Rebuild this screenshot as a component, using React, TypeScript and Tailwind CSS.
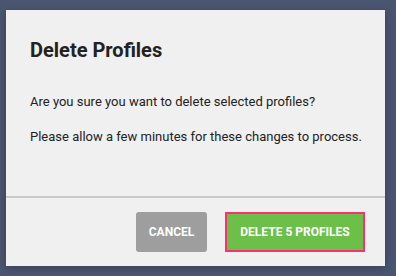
export default function App() {
  return (
    <div className="h-[276px] w-[396px] overflow-hidden bg-[#4a5570] pl-[6px] pt-[10px] font-['Roboto',sans-serif]">
      <div className="flex h-[256px] w-[379px] flex-col bg-[#f0f0f0] shadow-[0_2px_8px_rgba(0,0,0,0.25)]">
        <div className="flex-1 px-6 pt-[25px]">
          <h1 className="text-[20px] font-bold leading-[30px] text-[#222]">Delete Profiles</h1>
          <p className="mt-[27px] whitespace-nowrap text-[13px] leading-[20px] text-[#222]">
            Are you sure you want to delete selected profiles?
          </p>
          <p className="mt-[15px] whitespace-nowrap text-[13px] leading-[20px] text-[#222]">
            Please allow a few minutes for these changes to process.
          </p>
        </div>
        <div className="h-[2px] bg-[#c9c9c9]" />
        <div className="flex items-center justify-end gap-[18px] pb-[14px] pr-5 pt-[14px]">
          <button className="h-10 w-[71px] rounded-[3px] bg-[#9e9e9e] text-[12px] font-bold uppercase text-white">
            Cancel
          </button>
          <button className="h-10 w-[140px] border-2 border-[#ff2e6e] bg-[#6cc04a] text-[12px] font-bold uppercase text-white">
            Delete 5 Profiles
          </button>
        </div>
      </div>
    </div>
  );
}
